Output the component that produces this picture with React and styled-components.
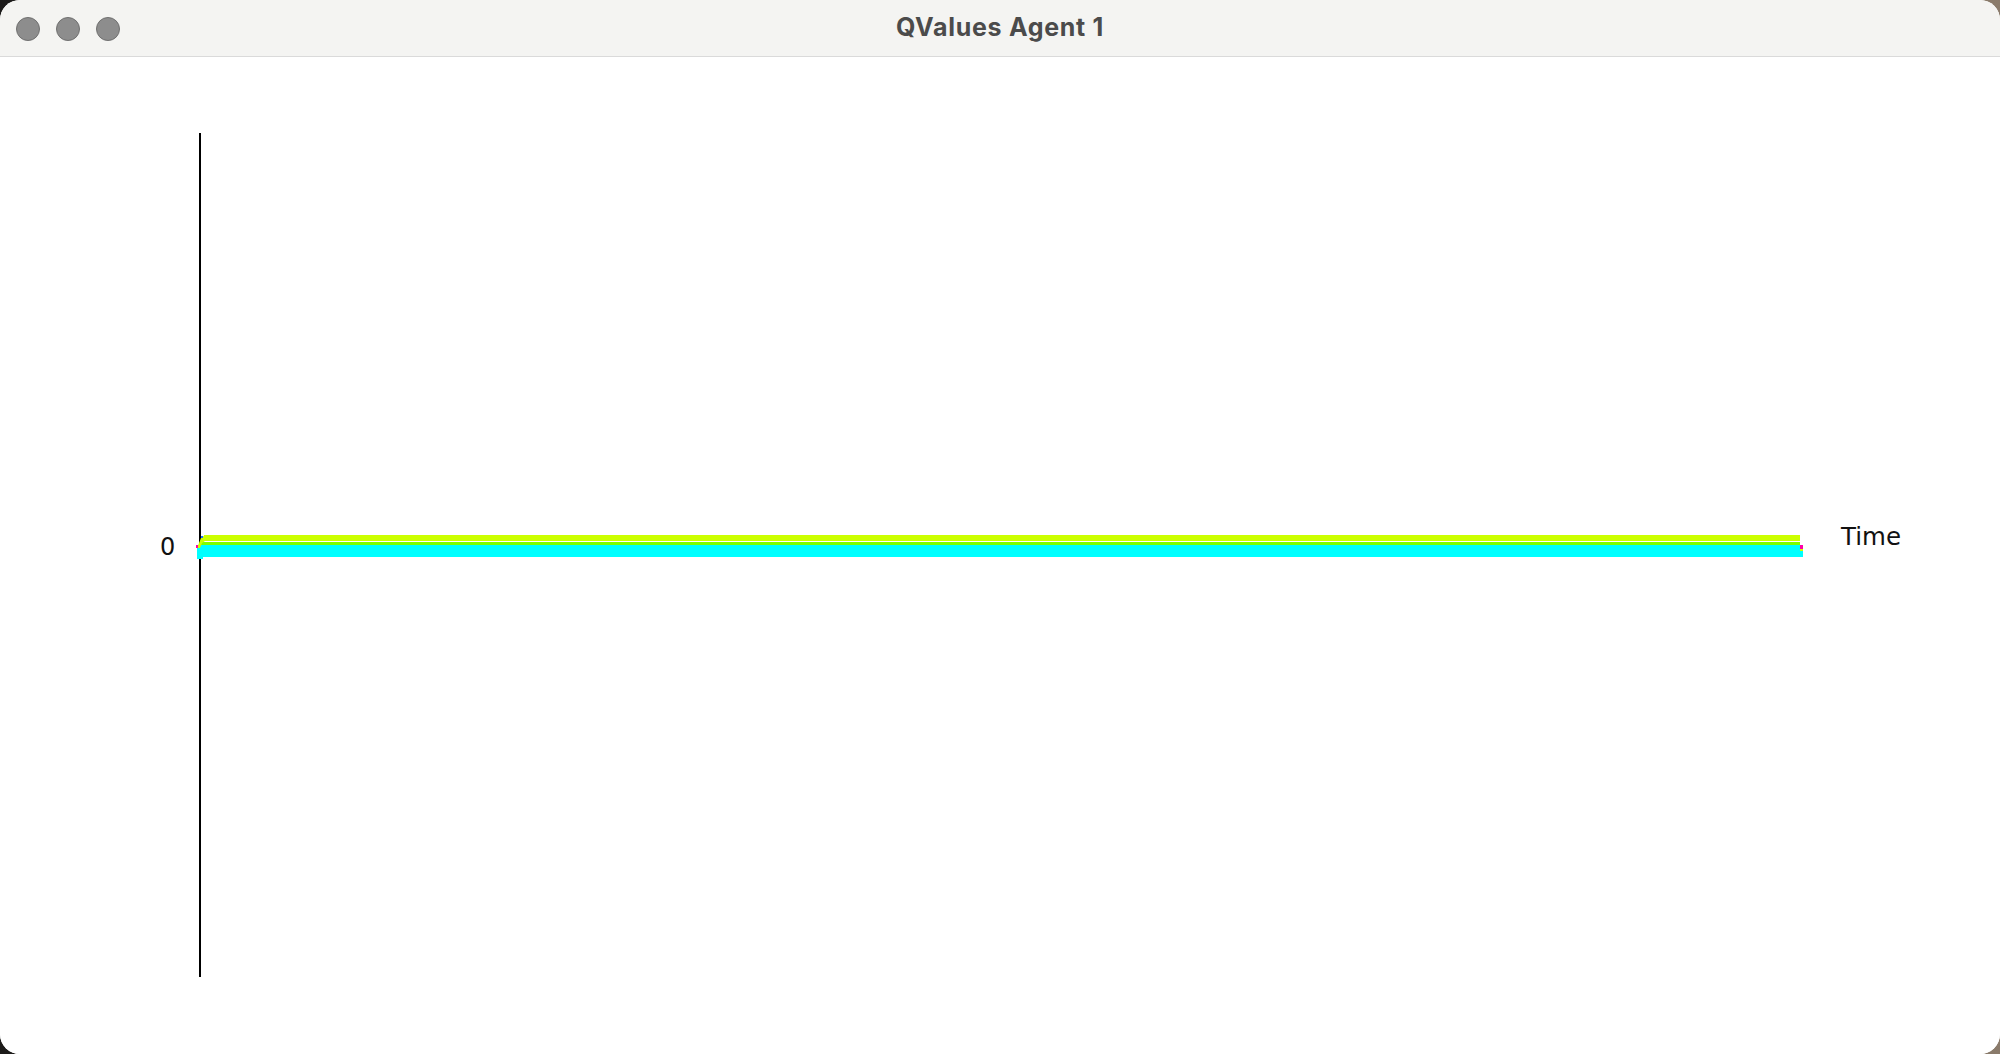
import styled, { createGlobalStyle } from 'styled-components'

const GlobalStyle = createGlobalStyle`
  html, body {
    margin: 0;
    padding: 0;
  }
  body {
    width: 2000px;
    height: 1054px;
    overflow: hidden;
    background: linear-gradient(90deg, #1c1b1a 0%, #5b5148 50%, #8a7b6b 100%);
  }
`

const Window = styled.div`
  width: 2000px;
  height: 1054px;
  border-radius: 20px;
  overflow: hidden;
  background: #ffffff;
  display: flex;
  flex-direction: column;
`

const TitleBar = styled.div`
  height: 56px;
  flex: 0 0 56px;
  background: #f4f4f2;
  border-bottom: 1px solid #dadada;
  display: grid;
  grid-template-columns: 1fr auto 1fr;
  align-items: center;
`

const Lights = styled.div`
  display: flex;
  gap: 16px;
  padding-left: 16px;
  padding-top: 1px;
`

const Light = styled.span`
  width: 22px;
  height: 22px;
  border-radius: 50%;
  background: #8d8d8d;
  border: 1px solid #707070;
`

const Title = styled.div`
  font-family: Inter, "Liberation Sans", sans-serif;
  font-weight: 700;
  font-size: 25px;
  letter-spacing: 0.7px;
  color: #4b4b4b;
  margin-top: -2px;
`

const ChartArea = styled.div`
  flex: 1;
  background: #ffffff;
`

const Plot = styled.svg`
  display: block;
  width: 2000px;
  height: 997px;
`

const Label = styled.text`
  font-family: "DejaVu Sans", sans-serif;
  font-size: ${(p) => p.$size || 24}px;
  fill: #111111;
`

// y values below are page pixels; the svg starts under the 57px title bar
const OFF = 57

function Chart() {
  return (
    <Plot viewBox="0 0 2000 997">
      <g transform={`translate(0 ${-OFF})`}>
        <rect x="199" y="133" width="2" height="844" fill="#000000" />

        <rect x="197" y="545" width="1606" height="12" fill="#00ffff" />
        <rect x="197" y="556" width="6" height="3" fill="#00ffff" />
        <rect x="201" y="542" width="1599" height="3" fill="#7dff00" />
        <rect x="204" y="535" width="1596" height="6" fill="#ccff00" />
        <polygon points="197,548 201,538 205,535 205,541 202,543 200,548" fill="#ccff00" />
        <rect x="201" y="536" width="2" height="2" fill="#1e6bff" />
        <rect x="196" y="545" width="2" height="3" fill="#ff00aa" />

        <rect x="1800" y="545" width="3" height="4" fill="#ff00aa" />
        <rect x="1800" y="549" width="3" height="2" fill="#ccff00" />

        <Label x="160" y="555">0</Label>
        <Label x="1841" y="545" $size={24.5}>Time</Label>
      </g>
    </Plot>
  )
}

export default function App() {
  return (
    <>
      <GlobalStyle />
      <Window>
        <TitleBar>
          <Lights>
            <Light />
            <Light />
            <Light />
          </Lights>
          <Title>QValues Agent 1</Title>
          <div />
        </TitleBar>
        <ChartArea>
          <Chart />
        </ChartArea>
      </Window>
    </>
  )
}
